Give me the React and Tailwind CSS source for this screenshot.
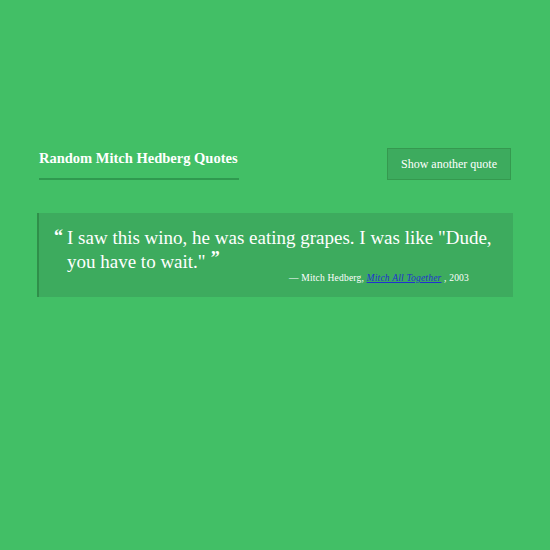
export default function App() {
  return (
    <div className="min-h-[550px] w-[550px] bg-[#42bf66] font-['Liberation_Serif',serif] text-white">
      <div className="mx-auto w-[476px] pt-[148px]">
        <div className="flex items-start justify-between px-[2px]">
          <div className="w-[200px] border-b-2 border-[#2f9a4f] pb-[11px] pt-[1px]">
            <h1 className="whitespace-nowrap text-[14.5px] font-bold leading-[18px]">Random Mitch Hedberg Quotes</h1>
          </div>
          <button className="h-[32px] w-[124px] border border-[#35994f] bg-[#3dab5e] text-[12px] text-white">
            Show another quote
          </button>
        </div>
        <div className="mt-[33px] border-l-2 border-[#2f8f4a] bg-[#3dab5e] pb-[12px] pl-[15px] pr-[12px] pt-[13px]">
          <div className="flex">
            <span className="mr-[4px] mt-[1px] text-[18px] font-bold leading-[18px]">“</span>
            <p className="text-[19px] leading-[24px]">
              I saw this wino, he was eating grapes. I was like "Dude, you have to wait."
              <span className="relative top-[-4px] ml-[5px] text-[18px] font-bold leading-[18px]">”</span>
            </p>
          </div>
          <p className="mr-[32px] mt-[-3px] text-right text-[9.5px] tracking-[0.2px]">
            — Mitch Hedberg, <a href="#" className="italic text-[#2230d0] underline">Mitch All Together</a> , 2003
          </p>
        </div>
      </div>
    </div>
  );
}
